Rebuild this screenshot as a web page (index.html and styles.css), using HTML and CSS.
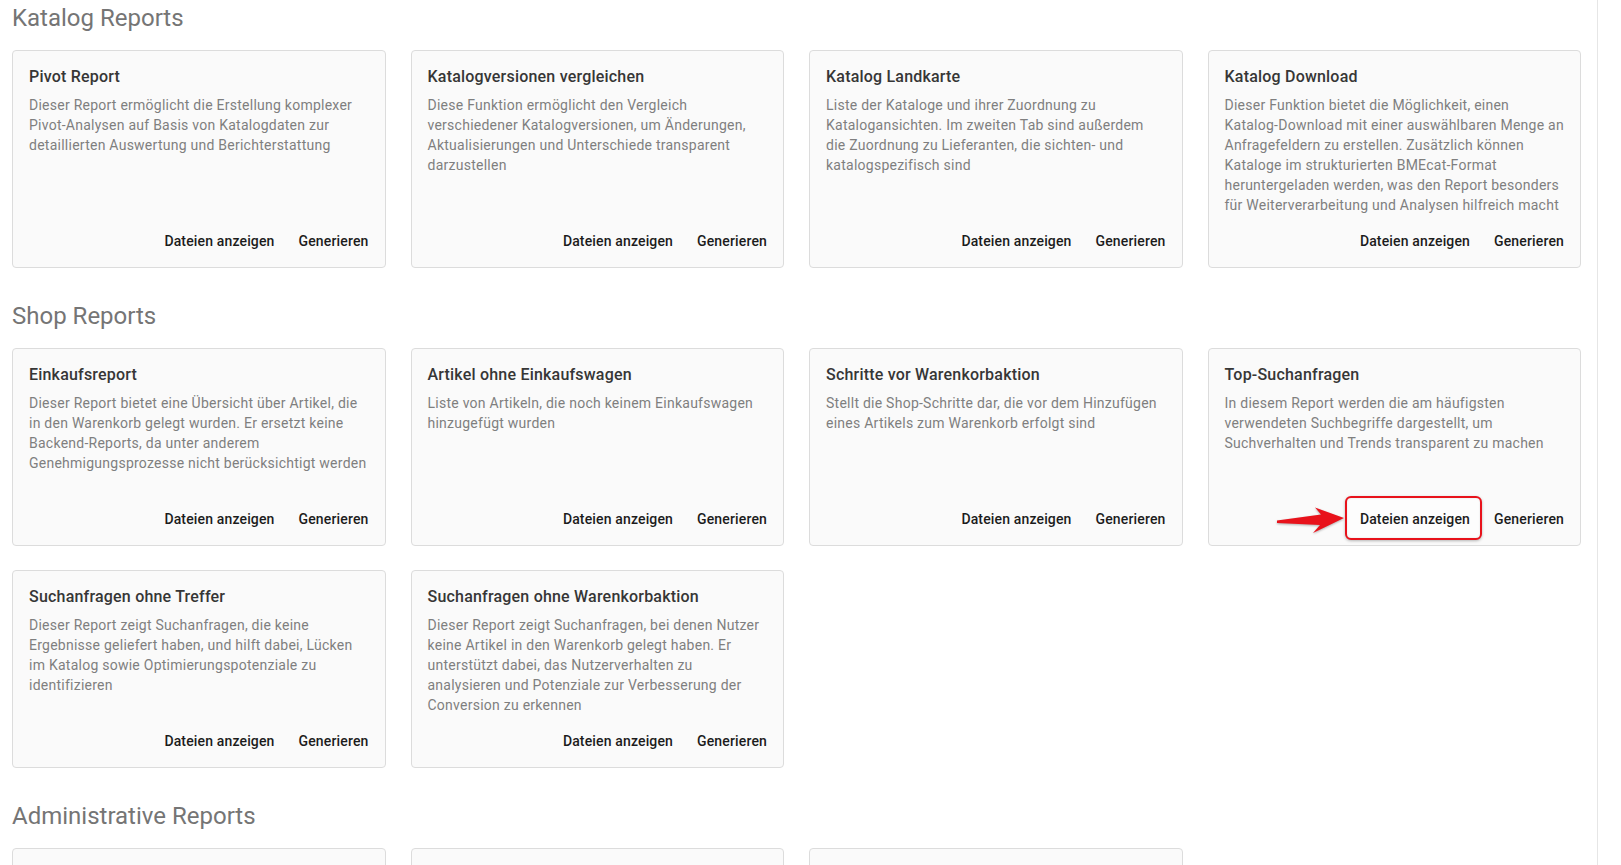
FILE: index.html
```html
<!DOCTYPE html>
<html lang="de">
<head>
<meta charset="utf-8">
<title>Reports</title>
<link rel="stylesheet" href="styles.css">
</head>
<body>
<div class="app">
  <main class="reports">
    <section class="report-group">
      <h2 class="group-title">Katalog Reports</h2>
      <div class="card-grid">
        <article class="card">
          <h3 class="card-title">Pivot Report</h3>
          <p class="card-text">Dieser Report ermöglicht die Erstellung komplexer Pivot-Analysen auf Basis von Katalogdaten zur detaillierten Auswertung und Berichterstattung</p>
          <div class="card-actions"><button class="btn">Dateien anzeigen</button><button class="btn">Generieren</button></div>
        </article>
        <article class="card">
          <h3 class="card-title">Katalogversionen vergleichen</h3>
          <p class="card-text">Diese Funktion ermöglicht den Vergleich verschiedener Katalogversionen, um Änderungen, Aktualisierungen und Unterschiede transparent darzustellen</p>
          <div class="card-actions"><button class="btn">Dateien anzeigen</button><button class="btn">Generieren</button></div>
        </article>
        <article class="card">
          <h3 class="card-title">Katalog Landkarte</h3>
          <p class="card-text">Liste der Kataloge und ihrer Zuordnung zu Katalogansichten. Im zweiten Tab sind außerdem die Zuordnung zu Lieferanten, die sichten- und katalogspezifisch sind</p>
          <div class="card-actions"><button class="btn">Dateien anzeigen</button><button class="btn">Generieren</button></div>
        </article>
        <article class="card">
          <h3 class="card-title">Katalog Download</h3>
          <p class="card-text">Dieser Funktion bietet die Möglichkeit, einen Katalog-Download mit einer auswählbaren Menge an Anfragefeldern zu erstellen. Zusätzlich können Kataloge im strukturierten BMEcat-Format heruntergeladen werden, was den Report besonders für Weiterverarbeitung und Analysen hilfreich macht</p>
          <div class="card-actions"><button class="btn">Dateien anzeigen</button><button class="btn">Generieren</button></div>
        </article>
      </div>
    </section>

    <section class="report-group">
      <h2 class="group-title">Shop Reports</h2>
      <div class="card-grid">
        <article class="card">
          <h3 class="card-title">Einkaufsreport</h3>
          <p class="card-text">Dieser Report bietet eine Übersicht über Artikel, die in den Warenkorb gelegt wurden. Er ersetzt keine Backend-Reports, da unter anderem Genehmigungsprozesse nicht berücksichtigt werden</p>
          <div class="card-actions"><button class="btn">Dateien anzeigen</button><button class="btn">Generieren</button></div>
        </article>
        <article class="card">
          <h3 class="card-title">Artikel ohne Einkaufswagen</h3>
          <p class="card-text">Liste von Artikeln, die noch keinem Einkaufswagen hinzugefügt wurden</p>
          <div class="card-actions"><button class="btn">Dateien anzeigen</button><button class="btn">Generieren</button></div>
        </article>
        <article class="card">
          <h3 class="card-title">Schritte vor Warenkorbaktion</h3>
          <p class="card-text">Stellt die Shop-Schritte dar, die vor dem Hinzufügen eines Artikels zum Warenkorb erfolgt sind</p>
          <div class="card-actions"><button class="btn">Dateien anzeigen</button><button class="btn">Generieren</button></div>
        </article>
        <article class="card">
          <h3 class="card-title">Top-Suchanfragen</h3>
          <p class="card-text">In diesem Report werden die am häufigsten verwendeten Suchbegriffe dargestellt, um Suchverhalten und Trends transparent zu machen</p>
          <div class="card-actions">
            <button class="btn btn-marked">
              <svg class="pointer-arrow" width="72" height="30" viewBox="0 0 72 30" aria-hidden="true">
                <path d="M2 15.5 L46 9.5 L40 2.5 L69 13 L38 28 L45 20 L2 18 Z" fill="#e8121b"/>
              </svg>
              <span class="mark-frame"></span>
              <span class="btn-label">Dateien anzeigen</span>
            </button>
            <button class="btn">Generieren</button>
          </div>
        </article>
        <article class="card">
          <h3 class="card-title">Suchanfragen ohne Treffer</h3>
          <p class="card-text">Dieser Report zeigt Suchanfragen, die keine Ergebnisse geliefert haben, und hilft dabei, Lücken im Katalog sowie Optimierungspotenziale zu identifizieren</p>
          <div class="card-actions"><button class="btn">Dateien anzeigen</button><button class="btn">Generieren</button></div>
        </article>
        <article class="card">
          <h3 class="card-title">Suchanfragen ohne Warenkorbaktion</h3>
          <p class="card-text">Dieser Report zeigt Suchanfragen, bei denen Nutzer keine Artikel in den Warenkorb gelegt haben. Er unterstützt dabei, das Nutzerverhalten zu analysieren und Potenziale zur Verbesserung der Conversion zu erkennen</p>
          <div class="card-actions"><button class="btn">Dateien anzeigen</button><button class="btn">Generieren</button></div>
        </article>
      </div>
    </section>

    <section class="report-group">
      <h2 class="group-title">Administrative Reports</h2>
      <div class="card-grid">
        <article class="card"></article>
        <article class="card"></article>
        <article class="card"></article>
      </div>
    </section>
  </main>
  <aside class="side-rail"></aside>
</div>
</body>
</html>
```

FILE: styles.css
```css
* {
  box-sizing: border-box;
}

html,
body {
  margin: 0;
  height: 100%;
  overflow: hidden;
  background: #ffffff;
}

body {
  font-family: Roboto, "Liberation Sans", Arial, sans-serif;
  color: #212121;
}

.app {
  display: flex;
  height: 100vh;
  overflow: hidden;
}

.reports {
  width: 1597px;
  flex: none;
  padding: 0 16px 0 12px;
}

.side-rail {
  flex: 1;
  border-left: 1px solid #e6e6e6;
  background: #ffffff;
}

.report-group {
  margin-bottom: 30px;
}

.group-title {
  margin: 0 0 16px;
  padding-top: 2px;
  font-size: 24px;
  line-height: 32px;
  font-weight: 400;
  color: #757575;
}

.card-grid {
  display: grid;
  grid-template-columns: repeat(4, 1fr);
  column-gap: 25px;
  row-gap: 24px;
}

.card {
  display: flex;
  flex-direction: column;
  min-height: 198px;
  padding: 16px 16px 0;
  background: #fafafa;
  border: 1px solid #dcdcdc;
  border-radius: 4px;
}

.card-title {
  margin: 0;
  font-size: 16px;
  line-height: 20px;
  font-weight: 500;
  letter-spacing: 0.2px;
  color: #363636;
}

.card-text {
  flex: 1;
  margin: 8px 0 0;
  font-size: 14px;
  line-height: 20px;
  letter-spacing: 0.25px;
  color: #7f7f7f;
}

.card-actions {
  display: flex;
  justify-content: flex-end;
  gap: 8px;
  margin: 0 -8px;
  padding: 8px 0;
}

.btn {
  position: relative;
  height: 36px;
  padding: 0 8px;
  border: 0;
  border-radius: 4px;
  background: transparent;
  font-family: inherit;
  font-size: 14px;
  font-weight: 500;
  line-height: 36px;
  letter-spacing: 0.15px;
  color: #1c1c1c;
  cursor: pointer;
}

.btn-marked {
  overflow: visible;
}

.btn-label {
  position: relative;
}

/* red callout drawn over the first action of the card */
.mark-frame {
  position: absolute;
  top: -5px;
  right: -4px;
  bottom: -3px;
  left: -7px;
  border: 2px solid #e8121b;
  border-radius: 6px;
  background: #fdfdfd;
  box-shadow: 0 1px 3px rgba(0, 0, 0, 0.28), inset 0 0 2px rgba(0, 0, 0, 0.12);
}

.pointer-arrow {
  position: absolute;
  left: -77px;
  top: 4px;
  overflow: visible;
  filter: drop-shadow(0 1px 1px rgba(0, 0, 0, 0.3));
}
```
